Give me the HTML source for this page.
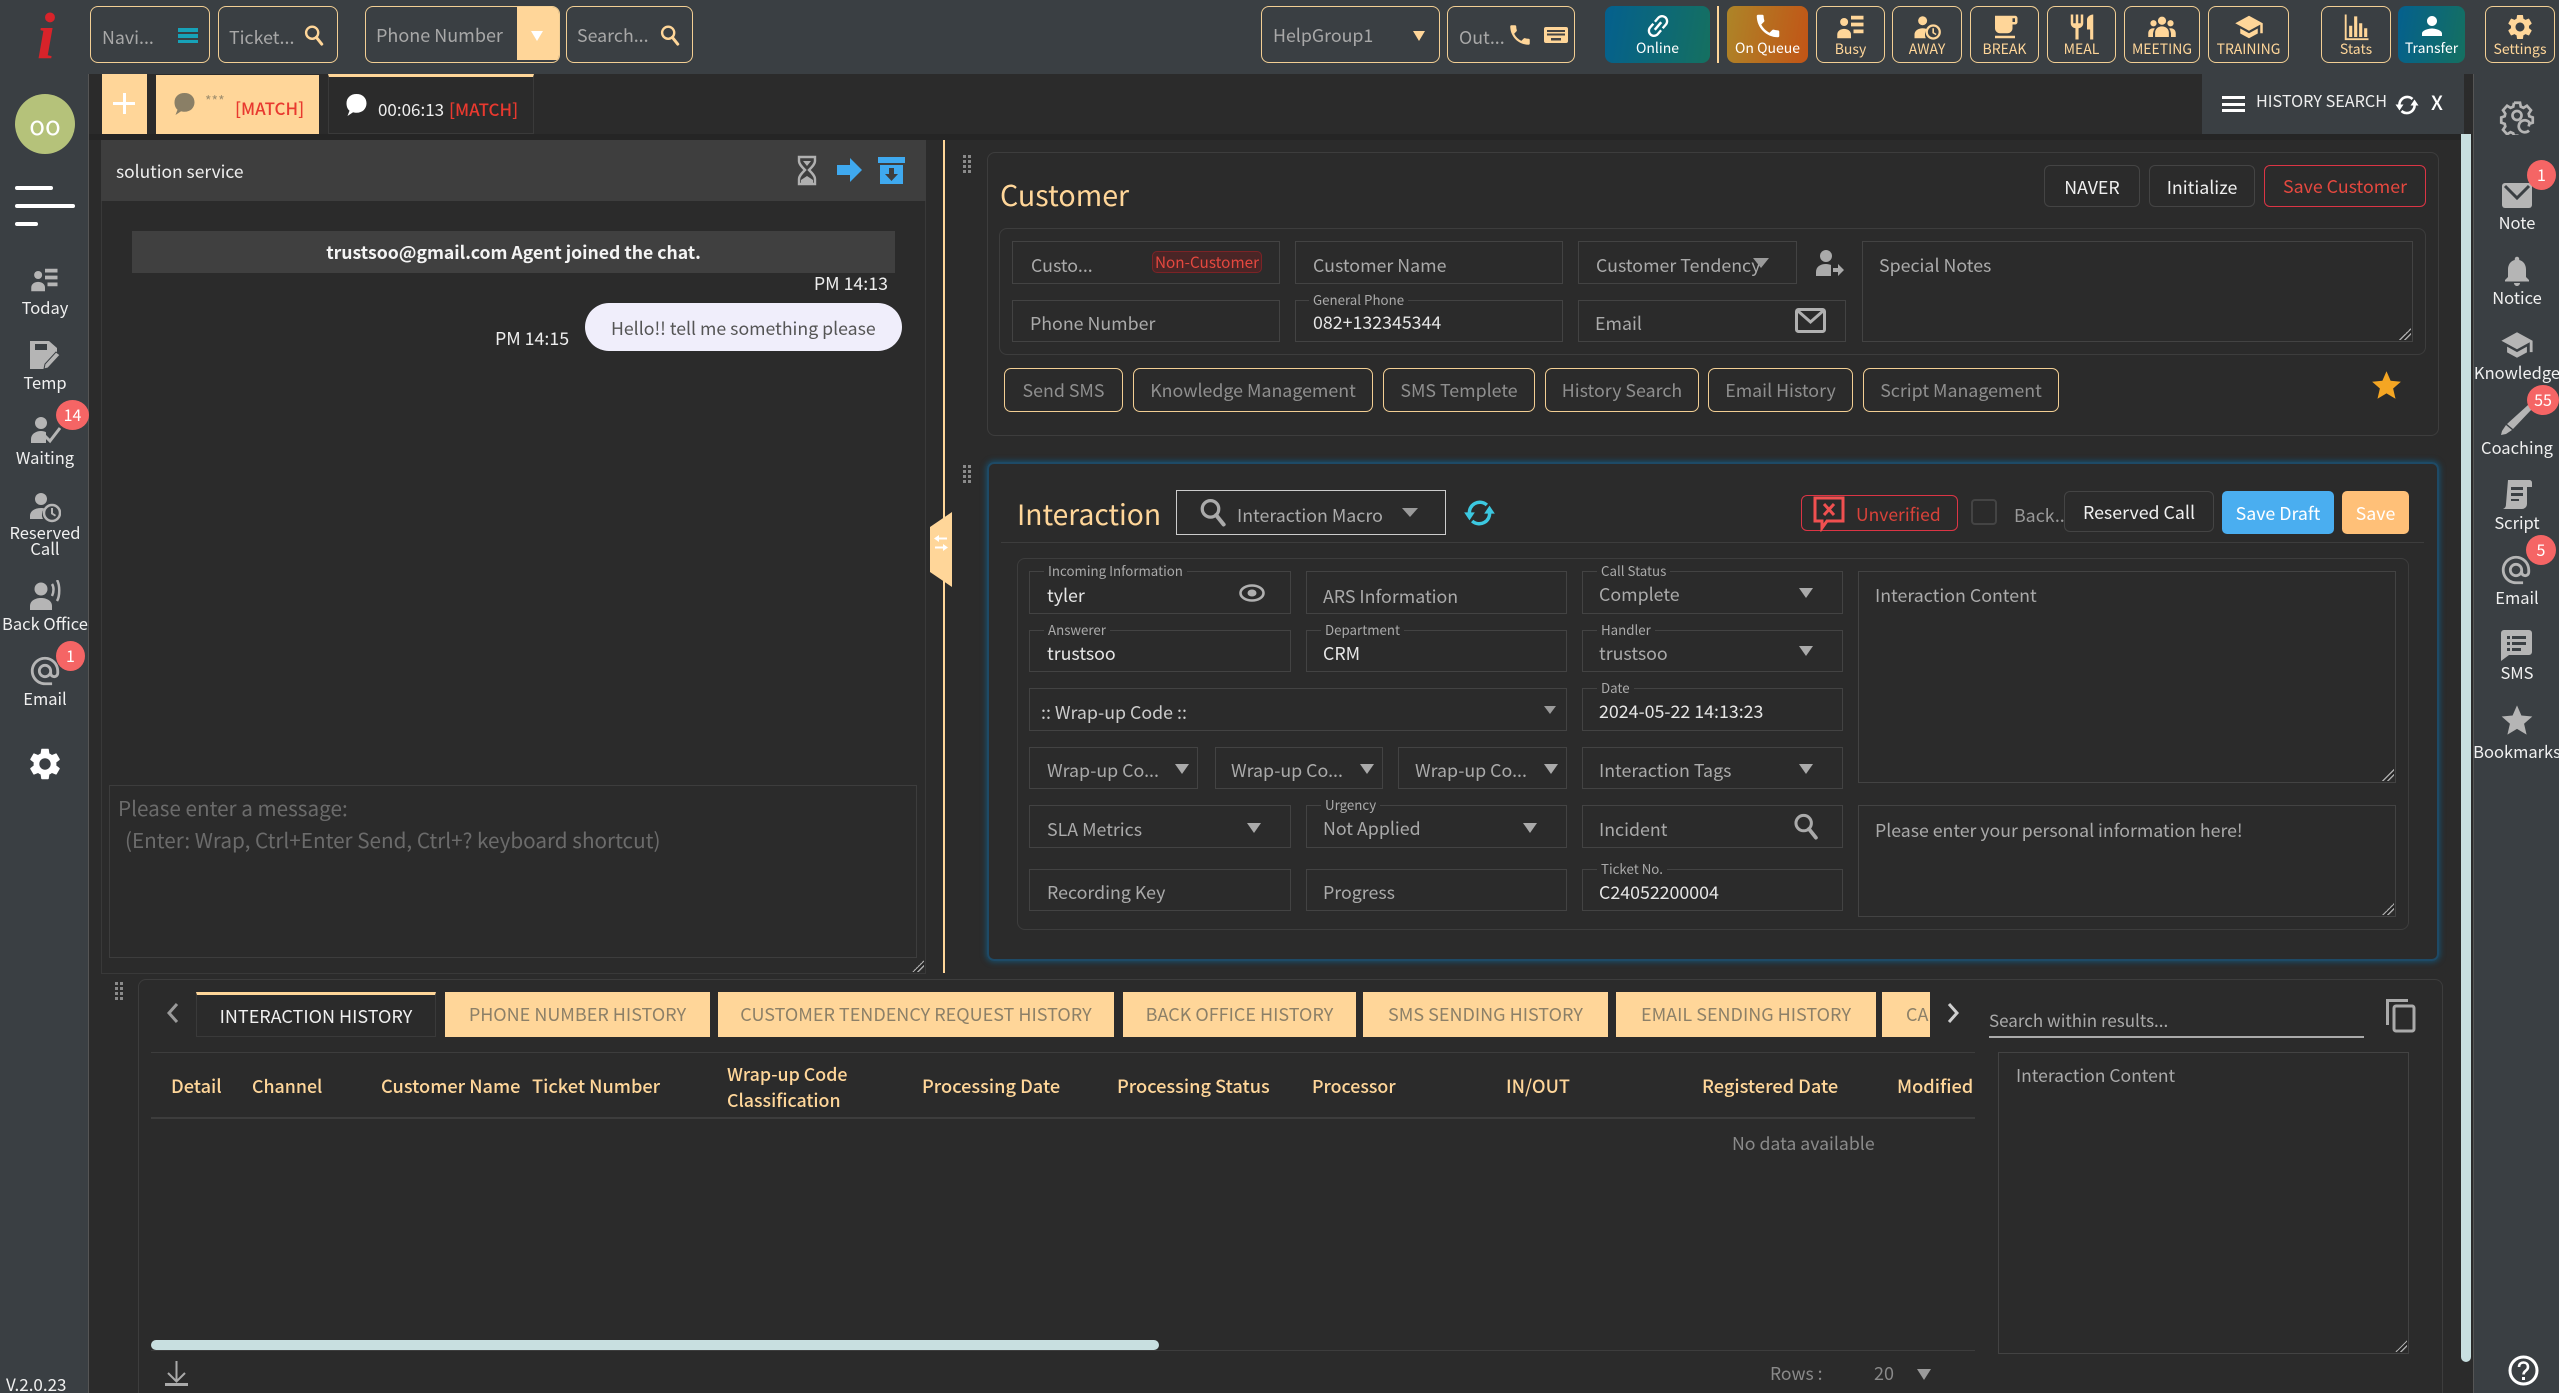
<!DOCTYPE html>
<html lang="en"><head><meta charset="utf-8"><title>Agent Console</title>
<style>
*{box-sizing:border-box;margin:0;padding:0}
html,body{width:2559px;height:1393px;overflow:hidden;background:#2b2b2b}
body{position:relative;font-family:"Noto Sans CJK KR","Liberation Sans",sans-serif;font-size:17.8px;color:#aaa}
.a,.t,.f,.b,.tb,.sl,.sr,.bd,.tab,.hd,svg.a{position:absolute}
.t{white-space:nowrap;line-height:24px}
.v{color:#e6e6e6}
.f{border:1px solid #434343;background:#2b2b2b}
.lg{position:absolute;top:-10px;left:14px;padding:0 4px;background:#2b2b2b;font-size:13.3px;line-height:18px;color:#aaa;white-space:nowrap}
.b{top:6px;height:57px;border:1.5px solid #f3cf94;border-radius:8px;background:#3a3f43}
.tb{top:6px;height:57px;border:1.5px solid #f3cf94;border-radius:8px;background:#3a3f43;color:#ffd699;font-size:14px}
.tb span{position:absolute;left:0;right:0;top:31px;line-height:22px;text-align:center;white-space:nowrap}
.tb svg{position:absolute;left:50%;top:5px;width:30px;height:30px;margin-left:-15px;fill:#ffd699}
.sl,.sr{text-align:center;color:#f0f0f0;font-size:16.5px;line-height:17px;white-space:nowrap;margin-top:-1.5px}
.sl{left:0;width:90px}.sr{left:2473px;width:88px}
.bd{height:30px;line-height:29px;text-align:center;background:#f56565;color:#fff;font-size:16px;border-radius:50%}
.ob{position:absolute;top:368px;height:44px;border:1.5px solid #f3cf94;border-radius:7px;text-align:center;line-height:43px;color:#8f8f8f;white-space:nowrap}
.tab{top:992px;height:45px;background:#ffd699;color:#8c8068;text-align:center;line-height:44px;white-space:nowrap;overflow:hidden;font-size:18px}
.hd{top:1075px;line-height:24px;color:#ffd699;font-weight:500;font-size:18.2px;white-space:nowrap}
.ic{fill:#b5b5b5}
.rz{position:absolute;right:1px;bottom:1px;width:12px;height:12px;background:linear-gradient(135deg,transparent 50%,#aaa 50%,#aaa 58%,#222 58%,#222 70%,#aaa 70%,#aaa 78%,transparent 78%)}
.cr{position:absolute;width:0;height:0;border-left:7px solid transparent;border-right:7px solid transparent;border-top:10px solid #9a9a9a}
</style></head><body>
<svg width="0" height="0" style="position:absolute"><defs>
<symbol id="search" viewBox="0 0 24 24"><circle cx="10" cy="9.5" r="6.6" fill="none" stroke="currentColor" stroke-width="2.6"/><path d="M14.5 14.5L20.5 22" fill="none" stroke="currentColor" stroke-width="3.2" stroke-linecap="round"/></symbol>
<symbol id="phone" viewBox="0 0 24 24"><path d="M6.62 10.79c1.44 2.83 3.76 5.14 6.59 6.59l2.2-2.2c.27-.27.67-.36 1.02-.24 1.12.37 2.33.57 3.57.57.55 0 1 .45 1 1V20c0 .55-.45 1-1 1-9.39 0-17-7.61-17-17 0-.55.45-1 1-1h3.5c.55 0 1 .45 1 1 0 1.25.2 2.45.57 3.57.11.35.03.74-.25 1.02l-2.2 2.2z"/></symbol>
<symbol id="person" viewBox="0 0 24 24"><path d="M12 12c2.21 0 4-1.79 4-4s-1.79-4-4-4-4 1.79-4 4 1.79 4 4 4zm0 2c-2.67 0-8 1.34-8 4v2h16v-2c0-2.66-5.33-4-8-4z"/></symbol>
<symbol id="gear" viewBox="0 0 24 24"><path d="M19.14 12.94c.04-.3.06-.61.06-.94 0-.32-.02-.64-.07-.94l2.03-1.58c.18-.14.23-.41.12-.61l-1.92-3.32c-.12-.22-.37-.29-.59-.22l-2.39.96c-.5-.38-1.03-.7-1.62-.94l-.36-2.54c-.04-.24-.24-.41-.48-.41h-3.84c-.24 0-.43.17-.47.41l-.36 2.54c-.59.24-1.13.57-1.62.94l-2.39-.96c-.22-.08-.47 0-.59.22L2.74 8.87c-.12.21-.08.47.12.61l2.03 1.58c-.05.3-.09.63-.09.94s.02.64.07.94l-2.03 1.58c-.18.14-.23.41-.12.61l1.92 3.32c.12.22.37.29.59.22l2.39-.96c.5.38 1.03.7 1.62.94l.36 2.54c.05.24.24.41.48.41h3.84c.24 0 .44-.17.47-.41l.36-2.54c.59-.24 1.13-.56 1.62-.94l2.39.96c.22.08.47 0 .59-.22l1.92-3.32c.12-.22.07-.47-.12-.61l-2.01-1.58zM12 15.6c-1.98 0-3.6-1.62-3.6-3.6s1.62-3.6 3.6-3.6 3.6 1.62 3.6 3.6-1.62 3.6-3.6 3.6z"/></symbol>
<symbol id="list" viewBox="0 0 24 24"><circle cx="6.5" cy="8" r="3.2"/><path d="M1 21v-3c0-3 3-4.5 5.5-4.5S12 15 12 18v3z"/><path d="M12 3h10v3H12zM12 8.500h10v3H12zM14 14h8v3h-8z"/></symbol>
<symbol id="at" viewBox="0 0 24 24"><path d="M12 2C6.48 2 2 6.48 2 12s4.48 10 10 10h5v-2h-5c-4.34 0-8-3.66-8-8s3.66-8 8-8 8 3.66 8 8v1.43c0 .79-.71 1.57-1.500 1.57s-1.500-.78-1.500-1.570V12c0-2.760-2.240-5-5-5s-5 2.240-5 5 2.240 5 5 5c1.380 0 2.640-.560 3.540-1.470.650.890 1.770 1.470 2.960 1.470 1.970 0 3.500-1.600 3.500-3.570V12c0-5.520-4.480-10-10-10zm0 13c-1.660 0-3-1.340-3-3s1.340-3 3-3 3 1.340 3 3-1.340 3-3 3z"/></symbol>
<symbol id="star" viewBox="0 0 24 24"><path d="M12 1l3.300 7.600 8.200.800-6.200 5.400 1.900 8.200L12 18.700 4.800 23l1.900-8.200L.5 9.400l8.200-.800z"/></symbol>
<symbol id="sync" viewBox="0 0 24 24"><path d="M4.500 13A7.800 7.800 0 0 1 17.500 6M19.500 11A7.800 7.800 0 0 1 6.500 18" fill="none" stroke="currentColor" stroke-width="2.600"/><path d="M.5 11.500h8l-4 6zM15.500 12.500h8l-4-6z" fill="currentColor"/></symbol>
<symbol id="school" viewBox="0 0 24 24"><path d="M5 13.180v4L12 21l7-3.820v-4L12 17l-7-3.820zM12 3L1 9l11 6 9-4.910V17h2V9L12 3z"/></symbol>
</defs></svg>

<!-- bars -->
<div class="a" style="left:0;top:0;width:2559px;height:74px;background:#3a3f43"></div>
<div class="a" style="left:0;top:74px;width:89px;height:1319px;background:#3a3f43;border-right:1px solid #555"></div>
<div class="a" style="left:89px;top:134px;width:2383px;height:6px;background:#252525"></div>
<div class="a" style="left:89px;top:140px;width:12px;height:1253px;background:#2b2b2b"></div>
<div class="a" style="left:2473px;top:74px;width:86px;height:1319px;background:#3a3f43;border-left:1px solid #555"></div>
<div class="a" style="left:2461px;top:134px;width:10px;height:1228px;background:#c8dfe0;border-radius:0 0 5px 5px"></div>

<!-- logo -->
<div class="a" style="left:24px;top:2px;width:44px;height:70px;color:#d8232a;font:italic 700 66px/70px 'Liberation Serif',serif;text-align:center">i</div>

<!-- top-left controls -->
<div class="b" style="left:90px;width:120px"></div>
<span class="t" style="left:102px;top:25px;color:#a8a8a8">Navi...</span>
<div class="a" style="left:178px;top:28px;width:20px;height:4px;background:#17a2b8"></div>
<div class="a" style="left:178px;top:34px;width:20px;height:4px;background:#17a2b8"></div>
<div class="a" style="left:178px;top:40px;width:20px;height:3px;background:#17a2b8"></div>
<div class="b" style="left:218px;width:120px"></div>
<span class="t" style="left:229px;top:25px;color:#a8a8a8">Ticket...</span>
<svg class="a" style="left:302px;top:24px;color:#ffd699" width="24" height="22"><use href="#search"/></svg>
<div class="b" style="left:365px;width:195px;overflow:hidden"><div class="a" style="left:151px;top:0;right:0;height:53px;background:#ffd699"></div></div>
<span class="t" style="left:376px;top:23px;color:#a8a8a8;font-size:18px">Phone Number</span>
<div class="cr" style="left:531px;top:31px;border-top-color:#fff;border-left-width:6px;border-right-width:6px"></div>
<div class="b" style="left:566px;width:127px"></div>
<span class="t" style="left:577px;top:23px;color:#a8a8a8">Search...</span>
<svg class="a" style="left:658px;top:24px;color:#ffd699" width="24" height="22"><use href="#search"/></svg>

<div class="b" style="left:1261px;width:179px"></div>
<span class="t" style="left:1273px;top:23px;color:#a8a8a8">HelpGroup1</span>
<div class="cr" style="left:1413px;top:31px;border-top-color:#ffd699;border-left-width:6px;border-right-width:6px"></div>
<div class="b" style="left:1447px;width:128px"></div>
<span class="t" style="left:1459px;top:25px;color:#a8a8a8">Out...</span>
<svg class="a" style="left:1507px;top:22px;fill:#ffd699" width="26" height="26" viewBox="0 0 24 24"><use href="#phone"/></svg>
<svg class="a" style="left:1544px;top:27px" width="24" height="16" viewBox="0 0 24 16"><rect width="24" height="16" rx="2" fill="#ffd699"/><path d="M3 3h18v2H3zM3 6.500h18v2H3zM7 11h10v2.500H7z" fill="#444"/></svg>

<!-- status buttons -->
<div class="tb" style="left:1605px;width:105px;border:0;background:linear-gradient(100deg,#04608e,#157060);color:#fff"><svg style="fill:#fff;transform:rotate(-50deg)" viewBox="0 0 24 24"><path d="M3.900 12c0-1.710 1.390-3.100 3.100-3.100h4V7H7c-2.760 0-5 2.240-5 5s2.240 5 5 5h4v-1.900H7c-1.710 0-3.100-1.390-3.100-3.100zM8 13h8v-2H8v2zm9-6h-4v1.900h4c1.710 0 3.100 1.390 3.100 3.100s-1.390 3.100-3.100 3.100h-4V17h4c2.760 0 5-2.240 5-5s-2.240-5-5-5z"/></svg><span>Online</span></div>
<div class="a" style="left:1717px;top:6px;width:2px;height:57px;background:#ffd699"></div>
<div class="tb" style="left:1727px;width:81px;border:0;background:linear-gradient(100deg,#ad8528,#c25416);color:#fff"><svg style="fill:#fff" viewBox="0 0 24 24"><use href="#phone"/></svg><span>On Queue</span></div>
<div class="tb" style="left:1816px;width:69px"><svg viewBox="0 0 24 24"><use href="#list"/></svg><span>Busy</span></div>
<div class="tb" style="left:1892px;width:70px"><svg viewBox="0 0 24 24"><circle cx="8.500" cy="7" r="3.600"/><path d="M2 21v-3c0-3 3-5 6.500-5 1.500 0 2.500.3 3.500.8A7 7 0 0 0 11 21z"/><circle cx="17" cy="16" r="5.200" fill="none" stroke="#ffd699" stroke-width="1.800"/><path d="M16.300 13h1.300v3.300l2 1.200-.6 1-2.700-1.600z"/></svg><span>AWAY</span></div>
<div class="tb" style="left:1970px;width:69px"><svg viewBox="0 0 24 24"><path d="M20 3H4v10c0 2.210 1.790 4 4 4h6c2.210 0 4-1.790 4-4v-3h2c1.110 0 2-.9 2-2V5c0-1.110-.89-2-2-2zm0 5h-2V5h2v3zM4 19h16v2H4z"/></svg><span>BREAK</span></div>
<div class="tb" style="left:2047px;width:69px"><svg viewBox="0 0 24 24"><path d="M11 9H9V2H7v7H5V2H3v7c0 2.120 1.660 3.840 3.750 3.970V22h2.500v-9.030C11.340 12.840 13 11.120 13 9V2h-2v7zm5-3v8h2.500v8H21V2c-2.760 0-5 2.240-5 4z"/></svg><span>MEAL</span></div>
<div class="tb" style="left:2124px;width:76px"><svg viewBox="0 0 24 24"><circle cx="12" cy="7" r="3.300"/><circle cx="5.200" cy="9" r="2.500"/><circle cx="18.800" cy="9" r="2.500"/><path d="M6.500 20v-3.500c0-3 2.500-5 5.500-5s5.500 2 5.500 5V20zM1 20v-3c0-2.300 1.700-4 4-4 .5 0 1 .1 1.300.2A7 7 0 0 0 4.800 17v3zM23 20v-3c0-2.300-1.700-4-4-4-.5 0-1 .1-1.300.2a7 7 0 0 1 1.500 3.800v3z"/></svg><span>MEETING</span></div>
<div class="tb" style="left:2208px;width:81px"><svg viewBox="0 0 24 24"><use href="#school"/></svg><span>TRAINING</span></div>
<div class="tb" style="left:2321px;width:70px"><svg viewBox="0 0 24 24"><path d="M3 2h1.500v19H22v1.500H3zM6.500 11H9v9H6.500zM10.500 3.500H13V20h-2.500zM14.500 9H17v11h-2.500zM18.500 13H21v7h-2.500z"/></svg><span>Stats</span></div>
<div class="tb" style="left:2398px;width:67px;border:0;background:linear-gradient(100deg,#04608e,#157060);color:#fff"><svg style="fill:#fff" viewBox="0 0 24 24"><use href="#person"/></svg><span>Transfer</span></div>
<div class="tb" style="left:2485px;width:70px"><svg viewBox="0 0 24 24"><use href="#gear"/></svg><span>Settings</span></div>

<!-- tabs row -->
<div class="a" style="left:102px;top:74px;width:45px;height:60px;background:#ffd699"></div>
<div class="a" style="left:113px;top:102px;width:22px;height:3px;background:#fff"></div>
<div class="a" style="left:123px;top:93px;width:3px;height:21px;background:#fff"></div>
<div class="a" style="left:156px;top:75px;width:163px;height:59px;background:#ffd699"></div>
<svg class="a" style="left:172px;top:92px;fill:#8a7f66" width="25" height="24" viewBox="0 0 24 24"><path d="M12 1c6 0 10 3.800 10 9.300 0 5.500-4 9.500-10 9.500-1.200 0-2.500-.2-3.400-.5L3 23l2-5.300C2.900 16 2 13.300 2 10.300 2 4.800 6 1 12 1z"/></svg>
<span class="t" style="left:205px;top:89px;font-size:14px;color:#a08f6e">***</span>
<span class="t" style="left:235px;top:96px;color:#e8392f;font-size:17px;font-weight:500">[MATCH]</span>
<div class="a" style="left:328px;top:74px;width:206px;height:60px;background:#2b2b2b;border:1px solid #3a3a3a;border-top:3px solid #ffd699"></div>
<svg class="a" style="left:344px;top:93px;fill:#fff" width="25" height="24" viewBox="0 0 24 24"><path d="M12 1c6 0 10 3.800 10 9.300 0 5.500-4 9.500-10 9.500-1.200 0-2.500-.2-3.400-.5L3 23l2-5.300C2.900 16 2 13.300 2 10.300 2 4.800 6 1 12 1z"/></svg>
<span class="t" style="left:378px;top:97px;color:#eee;font-size:17px">00:06:13</span>
<span class="t" style="left:449px;top:97px;color:#e8392f;font-size:17px;font-weight:500">[MATCH]</span>

<!-- history search -->
<div class="a" style="left:2202px;top:74px;width:262px;height:60px;background:#3a3f43"></div>
<div class="a" style="left:2222px;top:96px;width:23px;height:3px;background:#fff"></div>
<div class="a" style="left:2222px;top:103px;width:23px;height:3px;background:#fff"></div>
<div class="a" style="left:2222px;top:109px;width:23px;height:3px;background:#fff"></div>
<span class="t" style="left:2256px;top:88px;color:#eee;font-size:16.2px">HISTORY SEARCH</span>
<svg class="a" style="left:2395px;top:93px;color:#fff" width="24" height="24" viewBox="0 0 24 24"><use href="#sync"/></svg>
<span class="t" style="left:2431px;top:90px;color:#fff;font-size:20px;font-weight:500">X</span>

<!-- chat panel -->
<div class="a" style="left:101px;top:140px;width:825px;height:834px;border:1px solid #393939"></div>
<div class="a" style="left:101px;top:140px;width:825px;height:61px;background:#3e3e3e"></div>
<span class="t" style="left:116px;top:160px;color:#eee;font-size:17.4px">solution service</span>
<svg class="a" style="left:797px;top:155px" width="20" height="31" viewBox="0 0 20 31"><path d="M2 2h16v4c0 3-3 6-6 9 3 3 6 6 6 9v5H2v-5c0-3 3-6 6-9-3-3-6-6-6-9z" fill="none" stroke="#b0b0b0" stroke-width="2.400"/><path d="M6 6h8l-4 5zM4 28v-3l6-4 6 4v3z" fill="#b0b0b0"/></svg>
<svg class="a" style="left:837px;top:158px;fill:#3fa9ef" width="25" height="24" viewBox="0 0 25 24"><path d="M0 7h13V0l12 12-12 12v-7H0z"/></svg>
<svg class="a" style="left:878px;top:157px;fill:#3fa9ef" width="27" height="27" viewBox="0 0 27 27"><path d="M0 0h27v6H0zM2 8h23v19H2z"/><path d="M11 11h5v6h4l-6.500 7L7 17h4z" fill="#3e3e3e"/></svg>
<div class="a" style="left:132px;top:231px;width:763px;height:42px;background:#404040;text-align:center;color:#f4f4f4;font-weight:700;font-size:17.6px;line-height:43px">trustsoo@gmail.com Agent joined the chat.</div>
<span class="t" style="right:1671px;top:271px;color:#eee">PM 14:13</span>
<div class="a" style="left:585px;top:303px;width:317px;height:48px;background:#f0eefb;border-radius:24px;color:#555;line-height:50px;padding-left:26px;white-space:nowrap;font-size:17.7px">Hello!! tell me something please</div>
<span class="t" style="left:495px;top:326px;color:#eee">PM 14:15</span>
<div class="a" style="left:109px;top:785px;width:808px;height:173px;border:1px solid #3d3d3d"></div>
<span class="t" style="left:118px;top:795px;color:#6b6b6b;font-size:20.7px">Please enter a message:</span>
<span class="t" style="left:125px;top:827px;color:#6b6b6b;font-size:20.7px">(Enter: Wrap, Ctrl+Enter Send, Ctrl+? keyboard shortcut)</span>
<div class="rz" style="left:912px;top:960px"></div>

<div class="a" style="left:943px;top:140px;width:2px;height:833px;background:#ffd699"></div>
<svg class="a" style="left:930px;top:512px" width="22" height="75" viewBox="0 0 22 75"><path d="M22 0v75L0 60V15z" fill="#ffd699"/><path d="M9 24l-5 3.500L9 31v-2.500h8v-2H9zM13 33l5 3.500-5 3.500v-2.500H5v-2h8z" fill="#fff" transform="translate(0,-1)"/></svg>

<!-- grips -->
<svg class="a" style="left:963px;top:155px;fill:#8a8a8a" width="8" height="18"><path d="M0 0h3v3H0zM5 0h3v3H5zM0 5h3v3H0zM5 5h3v3H5zM0 10h3v3H0zM5 10h3v3H5zM0 15h3v3H0zM5 15h3v3H5z"/></svg>
<svg class="a" style="left:963px;top:465px;fill:#8a8a8a" width="8" height="18"><path d="M0 0h3v3H0zM5 0h3v3H5zM0 5h3v3H0zM5 5h3v3H5zM0 10h3v3H0zM5 10h3v3H5zM0 15h3v3H0zM5 15h3v3H5z"/></svg>
<svg class="a" style="left:115px;top:982px;fill:#8a8a8a" width="8" height="18"><path d="M0 0h3v3H0zM5 0h3v3H5zM0 5h3v3H0zM5 5h3v3H5zM0 10h3v3H0zM5 10h3v3H5zM0 15h3v3H0zM5 15h3v3H5z"/></svg>

<!-- customer panel -->
<div class="a" style="left:987px;top:152px;width:1452px;height:284px;border:1px solid #3d3d3d;border-radius:8px"></div>
<span class="t" style="left:1000px;top:176.500px;color:#ffd699;font-size:28.6px;line-height:36px">Customer</span>
<div class="a v" style="left:2044px;top:165px;width:96px;height:42px;border:1px solid #444;border-radius:6px;text-align:center;line-height:42px;color:#f0f0f0">NAVER</div>
<div class="a v" style="left:2149px;top:165px;width:106px;height:42px;border:1px solid #444;border-radius:6px;text-align:center;line-height:42px;color:#f0f0f0">Initialize</div>
<div class="a" style="left:2264px;top:165px;width:162px;height:42px;border:1.5px solid #dc3545;border-radius:6px;text-align:center;line-height:41px;color:#e5483f">Save Customer</div>
<div class="a" style="left:999px;top:228px;width:1427px;height:127px;border:1px solid #3d3d3d;border-radius:8px"></div>

<div class="f" style="left:1012px;top:241px;width:268px;height:43px"></div>
<span class="t" style="left:1031px;top:253px">Custo...</span>
<div class="a" style="left:1152px;top:251px;width:110px;height:22px;background:#4a2526;border:1px solid #7c2326;border-radius:5px;text-align:center;color:#e5483f;font-size:15.3px;line-height:20px;white-space:nowrap">Non-Customer</div>
<div class="f" style="left:1295px;top:241px;width:268px;height:43px"></div>
<span class="t" style="left:1313px;top:253px">Customer Name</span>
<div class="f" style="left:1578px;top:241px;width:219px;height:43px"></div>
<span class="t" style="left:1596px;top:253px">Customer Tendency</span>
<div class="cr" style="left:1753px;top:258px;border-left-width:8px;border-right-width:8px"></div>
<svg class="a" style="left:1813px;top:249px;fill:#aaa" width="32" height="28" viewBox="0 0 32 28"><circle cx="13" cy="7" r="6"/><path d="M3 27v-4c0-5 4-8 10-8 2 0 4 .5 5 1v11z"/><path d="M20 19h5v-4l6 6-6 6v-4h-5z"/></svg>
<div class="f" style="left:1862px;top:241px;width:551px;height:101px"><div class="rz"></div></div>
<span class="t" style="left:1879px;top:253px">Special Notes</span>
<div class="f" style="left:1012px;top:300px;width:268px;height:42px"></div>
<span class="t" style="left:1030px;top:311px">Phone Number</span>
<div class="f" style="left:1295px;top:300px;width:268px;height:42px"><div class="lg" style="left:13px">General Phone</div></div>
<span class="t v" style="left:1313px;top:310px">082+132345344</span>
<div class="f" style="left:1578px;top:300px;width:268px;height:42px"></div>
<span class="t" style="left:1595px;top:311px">Email</span>
<svg class="a" style="left:1795px;top:308px" width="31" height="25" viewBox="0 0 31 25"><rect x="1.500" y="1.500" width="28" height="22" rx="2" fill="none" stroke="#b0b0b0" stroke-width="3"/><path d="M3 3l12.500 11L28 3" fill="none" stroke="#b0b0b0" stroke-width="3"/></svg>

<div class="ob" style="left:1004px;width:119px">Send SMS</div>
<div class="ob" style="left:1133px;width:240px">Knowledge Management</div>
<div class="ob" style="left:1383px;width:152px">SMS Templete</div>
<div class="ob" style="left:1545px;width:154px">History Search</div>
<div class="ob" style="left:1708px;width:145px">Email History</div>
<div class="ob" style="left:1863px;width:196px">Script Management</div>
<svg class="a" style="left:2371px;top:370px;fill:#f5a623" width="31" height="30" viewBox="0 0 24 24"><use href="#star"/></svg>

<!-- interaction panel -->
<div class="a" style="left:987px;top:462px;width:1452px;height:499px;border:2px solid #1e4a66;border-radius:7px;box-shadow:0 0 6px 1px #17506f"></div>
<span class="t" style="left:1017px;top:495.500px;color:#ffd699;font-size:28.2px;line-height:36px">Interaction</span>
<div class="a" style="left:1176px;top:490px;width:270px;height:45px;border:1px solid #ccc"></div>
<svg class="a" style="left:1198px;top:497px;color:#aaa" width="30" height="30"><use href="#search"/></svg>
<span class="t" style="left:1237px;top:503px;color:#aaa">Interaction Macro</span>
<div class="cr" style="left:1402px;top:508px;border-left-width:8px;border-right-width:8px;border-top-width:9px"></div>
<svg class="a" style="left:1463px;top:497px;color:#3cc8e0" width="33" height="32" viewBox="0 0 24 24"><use href="#sync"/></svg>
<div class="a" style="left:1801px;top:495px;width:157px;height:36px;border:1.5px solid #dc3545;border-radius:6px"></div>
<svg class="a" style="left:1813px;top:494px" width="32" height="38" viewBox="0 0 32 38"><path d="M2 4h28v23H14l-5 7v-7H2z" fill="none" stroke="#f05050" stroke-width="3"/><path d="M11 10l10 11M21 10L11 21" stroke="#f05050" stroke-width="3"/></svg>
<span class="t" style="left:1856px;top:503px;color:#d9423a;font-size:17.5px">Unverified</span>
<div class="a" style="left:1971px;top:499px;width:26px;height:26px;border:2px solid #444;border-radius:4px"></div>
<span class="t" style="left:2014px;top:503px;color:#999">Back...</span>
<div class="a" style="left:2064px;top:491px;width:150px;height:41px;border:1px solid #444;border-radius:6px;text-align:center;line-height:40px;color:#f0f0f0;background:#2b2b2b">Reserved Call</div>
<div class="a" style="left:2222px;top:491px;width:112px;height:43px;background:#4aaef0;border-radius:5px;text-align:center;line-height:45px;color:#fff">Save Draft</div>
<div class="a" style="left:2342px;top:491px;width:67px;height:43px;background:#ffc078;border-radius:5px;text-align:center;line-height:45px;color:#fff">Save</div>
<div class="a" style="left:1001px;top:542px;width:1423px;height:1px;background:#3d3d3d"></div>
<div class="a" style="left:1017px;top:558px;width:1392px;height:372px;border:1px solid #3d3d3d;border-radius:8px"></div>

<div class="f" style="left:1029px;top:571px;width:262px;height:43px"><div class="lg">Incoming Information</div></div>
<span class="t v" style="left:1047px;top:583px">tyler</span>
<svg class="a" style="left:1239px;top:584px" width="26" height="18" viewBox="0 0 26 18"><ellipse cx="13" cy="9" rx="11.500" ry="7.500" fill="none" stroke="#b0b0b0" stroke-width="2.600"/><ellipse cx="13" cy="9" rx="4.500" ry="3.500" fill="#b0b0b0"/></svg>
<div class="f" style="left:1306px;top:571px;width:261px;height:43px"></div>
<span class="t" style="left:1323px;top:584px">ARS Information</span>
<div class="f" style="left:1582px;top:571px;width:261px;height:43px"><div class="lg">Call Status</div></div>
<span class="t" style="left:1599px;top:582px">Complete</span>
<div class="cr" style="left:1799px;top:588px;border-top-color:#aaa"></div>

<div class="f" style="left:1029px;top:630px;width:262px;height:42px"><div class="lg">Answerer</div></div>
<span class="t v" style="left:1047px;top:641px">trustsoo</span>
<div class="f" style="left:1306px;top:630px;width:261px;height:42px"><div class="lg">Department</div></div>
<span class="t v" style="left:1323px;top:641px">CRM</span>
<div class="f" style="left:1582px;top:630px;width:261px;height:42px"><div class="lg">Handler</div></div>
<span class="t" style="left:1599px;top:641px">trustsoo</span>
<div class="cr" style="left:1799px;top:646px;border-top-color:#aaa"></div>

<div class="f" style="left:1029px;top:688px;width:538px;height:43px"></div>
<span class="t" style="left:1041px;top:700px;color:#ccc">:: Wrap-up Code ::</span>
<div class="cr" style="left:1544px;top:706px;border-left-width:6px;border-right-width:6px;border-top-width:8px"></div>
<div class="f" style="left:1582px;top:688px;width:261px;height:43px"><div class="lg">Date</div></div>
<span class="t v" style="left:1599px;top:699px">2024-05-22 14:13:23</span>

<div class="f" style="left:1029px;top:747px;width:169px;height:42px"></div>
<span class="t" style="left:1047px;top:758px">Wrap-up Co...</span>
<div class="cr" style="left:1175px;top:764px;border-top-color:#aaa"></div>
<div class="f" style="left:1215px;top:747px;width:168px;height:42px"></div>
<span class="t" style="left:1231px;top:758px">Wrap-up Co...</span>
<div class="cr" style="left:1360px;top:764px;border-top-color:#aaa"></div>
<div class="f" style="left:1398px;top:747px;width:169px;height:42px"></div>
<span class="t" style="left:1415px;top:758px">Wrap-up Co...</span>
<div class="cr" style="left:1544px;top:764px;border-top-color:#aaa"></div>
<div class="f" style="left:1582px;top:747px;width:261px;height:42px"></div>
<span class="t" style="left:1599px;top:758px">Interaction Tags</span>
<div class="cr" style="left:1799px;top:764px;border-top-color:#aaa"></div>

<div class="f" style="left:1029px;top:805px;width:262px;height:43px"></div>
<span class="t" style="left:1047px;top:817px">SLA Metrics</span>
<div class="cr" style="left:1247px;top:823px;border-top-color:#aaa"></div>
<div class="f" style="left:1306px;top:805px;width:261px;height:43px"><div class="lg">Urgency</div></div>
<span class="t" style="left:1323px;top:816px">Not Applied</span>
<div class="cr" style="left:1523px;top:823px;border-top-color:#aaa"></div>
<div class="f" style="left:1582px;top:805px;width:261px;height:43px"></div>
<span class="t" style="left:1599px;top:817px">Incident</span>
<svg class="a" style="left:1792px;top:812px;color:#aaa" width="28" height="28"><use href="#search"/></svg>

<div class="f" style="left:1029px;top:869px;width:262px;height:42px"></div>
<span class="t" style="left:1047px;top:880px">Recording Key</span>
<div class="f" style="left:1306px;top:869px;width:261px;height:42px"></div>
<span class="t" style="left:1323px;top:880px">Progress</span>
<div class="f" style="left:1582px;top:869px;width:261px;height:42px"><div class="lg">Ticket No.</div></div>
<span class="t v" style="left:1599px;top:880px">C24052200004</span>

<div class="f" style="left:1858px;top:571px;width:538px;height:212px"><div class="rz"></div></div>
<span class="t" style="left:1875px;top:583px">Interaction Content</span>
<div class="f" style="left:1858px;top:805px;width:538px;height:112px"><div class="rz"></div></div>
<span class="t" style="left:1875px;top:817.500px;font-size:17.7px">Please enter your personal information here!</span>

<!-- bottom panel -->
<div class="a" style="left:138px;top:979px;width:2305px;height:414px;border:1px solid #3d3d3d;border-bottom:0;border-radius:8px 8px 0 0"></div>
<svg class="a" style="left:166px;top:1003px" width="14" height="20" viewBox="0 0 14 20"><path d="M11 1L3 10l8 9" fill="none" stroke="#9a9a9a" stroke-width="3"/></svg>
<div class="tab" style="left:196px;width:240px;background:#2b2b2b;border:1px solid #3a3a3a;border-top:3px solid #ffd699;color:#f0f0f0;line-height:42px">INTERACTION HISTORY</div>
<div class="tab" style="left:445px;width:265px">PHONE NUMBER HISTORY</div>
<div class="tab" style="left:718px;width:396px">CUSTOMER TENDENCY REQUEST HISTORY</div>
<div class="tab" style="left:1123px;width:233px">BACK OFFICE HISTORY</div>
<div class="tab" style="left:1363px;width:245px">SMS SENDING HISTORY</div>
<div class="tab" style="left:1616px;width:260px">EMAIL SENDING HISTORY</div>
<div class="tab" style="left:1882px;width:48px;text-align:left;padding-left:24px">CALL</div>
<svg class="a" style="left:1946px;top:1003px" width="14" height="20" viewBox="0 0 14 20"><path d="M3 1l8 9-8 9" fill="none" stroke="#cfcfcf" stroke-width="3"/></svg>
<span class="t" style="left:1989px;top:1008px;font-size:17px">Search within results...</span>
<div class="a" style="left:1989px;top:1036px;width:375px;height:2px;background:#aaa"></div>
<svg class="a" style="left:2386px;top:999px" width="30" height="34" viewBox="0 0 30 34"><path d="M1.500 26V1.500H22" fill="none" stroke="#aaa" stroke-width="3"/><rect x="8" y="7" width="20" height="25" rx="2" fill="none" stroke="#aaa" stroke-width="3"/></svg>
<div class="a" style="left:151px;top:1052px;width:1824px;height:1px;background:#3d3d3d"></div>
<div class="a" style="left:151px;top:1117px;width:1824px;height:2px;background:#3d3d3d"></div>
<span class="hd" style="left:171px;top:1074px">Detail</span>
<span class="hd" style="left:252px;top:1074px;font-size:17.8px">Channel</span>
<span class="hd" style="left:381px;top:1074px">Customer Name</span>
<span class="hd" style="left:532px;top:1074px">Ticket Number</span>
<span class="hd" style="left:727px;top:1062px;font-size:17.8px">Wrap-up Code</span>
<span class="hd" style="left:727px;top:1088px;font-size:17.8px">Classification</span>
<span class="hd" style="left:922px;top:1074px">Processing Date</span>
<span class="hd" style="left:1117px;top:1074px">Processing Status</span>
<span class="hd" style="left:1312px;top:1074px;font-size:17.8px">Processor</span>
<span class="hd" style="left:1506px;top:1074px">IN/OUT</span>
<span class="hd" style="left:1702px;top:1074px">Registered Date</span>
<span class="hd" style="left:1897px;top:1074px;width:78px;overflow:hidden">Modified</span>
<span class="t" style="left:1732px;top:1131px;color:#8a8a8a;font-size:17.7px">No data available</span>
<div class="a" style="left:151px;top:1350px;width:1824px;height:1px;background:#3d3d3d"></div>
<div class="a" style="left:151px;top:1340px;width:1008px;height:10px;background:#c8dfe0;border-radius:5px"></div>
<svg class="a" style="left:165px;top:1361px" width="23" height="25" viewBox="0 0 23 25"><path d="M11.500 0v20M3 12l8.500 8.500L20 12" fill="none" stroke="#aaa" stroke-width="2"/><path d="M0 22h23v3H0z" fill="#aaa"/></svg>
<span class="t" style="left:1770px;top:1362px;color:#8a8a8a;font-size:17.5px">Rows :</span>
<span class="t" style="left:1874px;top:1361px;color:#8a8a8a;font-size:18px">20</span>
<div class="cr" style="left:1917px;top:1369px;border-left-width:7px;border-right-width:7px;border-top-width:11px"></div>
<div class="f" style="left:1998px;top:1052px;width:411px;height:302px"><div class="rz"></div></div>
<span class="t" style="left:2016px;top:1064px;font-size:17.5px">Interaction Content</span>

<!-- left sidebar -->
<div class="a" style="left:15px;top:94px;width:60px;height:60px;border-radius:50%;background:#b5c27a;color:#fff;text-align:center;font:400 26px/62px 'Noto Sans CJK KR',sans-serif">oo</div>
<div class="a" style="left:15px;top:186px;width:38px;height:4px;background:#fff;border-radius:2px"></div>
<div class="a" style="left:15px;top:204px;width:60px;height:4px;background:#fff;border-radius:2px"></div>
<div class="a" style="left:15px;top:222px;width:23px;height:4px;background:#fff;border-radius:2px"></div>
<svg class="a ic" style="left:29px;top:265px" width="32" height="30" viewBox="0 0 24 24"><use href="#list"/></svg><div class="sl" style="top:300px">Today</div>
<svg class="a ic" style="left:29px;top:340px" width="32" height="30" viewBox="0 0 32 30"><path d="M1 1h19l8 7v9l-9 9-2 3H1z"/><path d="M6 4h12v6H6z" fill="#3a3f43"/><path d="M27 12l4 3-12 13-4 1 1-5z" stroke="#3a3f43" stroke-width="1"/></svg><div class="sl" style="top:375px">Temp</div>
<svg class="a ic" style="left:29px;top:416px" width="32" height="28" viewBox="0 0 32 28"><circle cx="12" cy="7" r="6"/><path d="M2 27v-4c0-5 5-8 10-8 2 0 4 .6 5 1.200V27z"/><path d="M16 20l5 5 10-13" fill="none" stroke="#b5b5b5" stroke-width="3"/></svg><div class="sl" style="top:450px">Waiting</div>
<div class="bd" style="left:56px;top:400px;width:33px">14</div>
<svg class="a ic" style="left:29px;top:492px" width="32" height="32" viewBox="0 0 32 32"><circle cx="12" cy="7" r="6"/><path d="M1 27v-3c0-5 5-8 11-8 1.500 0 2.500.2 3.500.5A9 9 0 0 0 14 27z"/><circle cx="23" cy="21" r="8" fill="none" stroke="#b5b5b5" stroke-width="2.500"/><path d="M22 16h2v5l3 2-1 1.500-4-2.500z"/></svg><div class="sl" style="top:525px">Reserved<br><span style="position:relative;top:-1px">Call</span></div>
<svg class="a ic" style="left:28px;top:580px" width="34" height="30" viewBox="0 0 34 30"><circle cx="13" cy="9" r="6.500"/><path d="M2 30v-4c0-5 5-8 11-8s11 3 11 8v4z"/><path d="M24 4c2 3 2 8 0 12M29 0c3 5 3 16 0 21" fill="none" stroke="#b5b5b5" stroke-width="2.500"/></svg><div class="sl" style="top:616px">Back Office</div>
<svg class="a ic" style="left:28px;top:654px" width="34" height="34" viewBox="0 0 24 24"><use href="#at"/></svg><div class="sl" style="top:691px">Email</div>
<div class="bd" style="left:56px;top:641px;width:29px">1</div>
<svg class="a" style="left:26px;top:745px;fill:#fff" width="38" height="38" viewBox="0 0 24 24"><use href="#gear"/></svg>
<span class="t" style="left:6px;top:1372px;color:#f0f0f0;font-size:17px">V.2.0.23</span>

<!-- right sidebar -->
<svg class="a" style="left:2499px;top:99px" width="36" height="36" viewBox="0 0 24 24"><path d="M10 2.500h4l.5 2.600 1.800.8 2.300-1.400 2.700 3-1.500 2.300.4 1.700 2.300.8v3.500l-2.300.8-.4 1.700" fill="none" stroke="#b5b5b5" stroke-width="1.800"/><path d="M10 2.500l-.5 2.600-1.800.8-2.300-1.400-2.700 3 1.500 2.300-.4 1.700-2.300.8v3.500l2.300.8.4 1.700-1.500 2.200 2.700 3 2.300-1.400 1.800.8.500 1.600h3" fill="none" stroke="#b5b5b5" stroke-width="1.800"/><circle cx="12" cy="11" r="3" fill="none" stroke="#b5b5b5" stroke-width="1.800"/><path d="M21 17a4 4 0 1 0-1 4" fill="none" stroke="#b5b5b5" stroke-width="1.800"/></svg>
<svg class="a" style="left:2502px;top:183px" width="30" height="25" viewBox="0 0 30 25"><rect width="30" height="25" rx="3" fill="#b5b5b5"/><path d="M3 3l12 12L27 3" fill="none" stroke="#3a3f43" stroke-width="3"/></svg><div class="sr" style="top:215px">Note</div>
<div class="bd" style="left:2527px;top:160px;width:29px">1</div>
<svg class="a ic" style="left:2497px;top:253px" width="40" height="36" viewBox="0 0 24 24"><path d="M12 22c1.100 0 2-.9 2-2h-4c0 1.100.89 2 2 2zm6-6v-5c0-3.070-1.640-5.640-4.500-6.320V4c0-.83-.67-1.500-1.500-1.500s-1.500.67-1.500 1.500v.68C7.630 5.360 6 7.920 6 11v5l-2 2v1h16v-1l-2-2z"/></svg><div class="sr" style="top:290px">Notice</div>
<svg class="a ic" style="left:2499px;top:328px" width="36" height="34" viewBox="0 0 24 24"><use href="#school"/></svg><div class="sr" style="top:365px">Knowledge</div>
<svg class="a" style="left:2500px;top:404px" width="32" height="32" viewBox="0 0 32 32"><path d="M28 1l4 4-19 20-6-5zM6 21l6 5-6 4-5 1 1-4z" fill="#b5b5b5"/></svg><div class="sr" style="top:440px">Coaching</div>
<div class="bd" style="left:2527px;top:385px;width:32px">55</div>
<svg class="a ic" style="left:2501px;top:479px" width="32" height="33" viewBox="0 0 32 33"><path d="M7 1h22a3 3 0 0 1 2 3v4h-5v17a5 5 0 0 1-5 5H2c2-1 3-2 3-5z"/><path d="M10 8h12v3H10zM10 14h12v3H10zM10 20h8v2h-8z" fill="#3a3f43"/></svg><div class="sr" style="top:515px">Script</div>
<svg class="a ic" style="left:2498px;top:553px" width="36" height="34" viewBox="0 0 24 24"><use href="#at"/></svg><div class="sr" style="top:590px">Email</div>
<div class="bd" style="left:2526px;top:535px;width:30px">5</div>
<svg class="a" style="left:2501px;top:630px" width="31" height="31" viewBox="0 0 31 31"><path d="M3 0h25a3 3 0 0 1 3 3v19a3 3 0 0 1-3 3H8l-8 6V3a3 3 0 0 1 3-3z" fill="#b5b5b5"/><path d="M6 6h3v3H6zM11 6h14v3H11zM6 12h3v3H6zM11 12h14v3H11zM6 18h3v3H6zM11 18h9v3h-9z" fill="#3a3f43"/></svg><div class="sr" style="top:665px">SMS</div>
<svg class="a ic" style="left:2500px;top:704px" width="34" height="32" viewBox="0 0 24 24"><use href="#star"/></svg><div class="sr" style="top:744px">Bookmarks</div>
<svg class="a" style="left:2508px;top:1355px" width="31" height="31" viewBox="0 0 31 31"><circle cx="15.500" cy="15.500" r="13.500" fill="none" stroke="#fff" stroke-width="3"/><path d="M11 12c0-6 9-6 9 0 0 4-4.500 3.500-4.500 7.500" fill="none" stroke="#fff" stroke-width="2.600"/><path d="M14 22h3v3h-3z" fill="#fff"/></svg>
</body></html>
